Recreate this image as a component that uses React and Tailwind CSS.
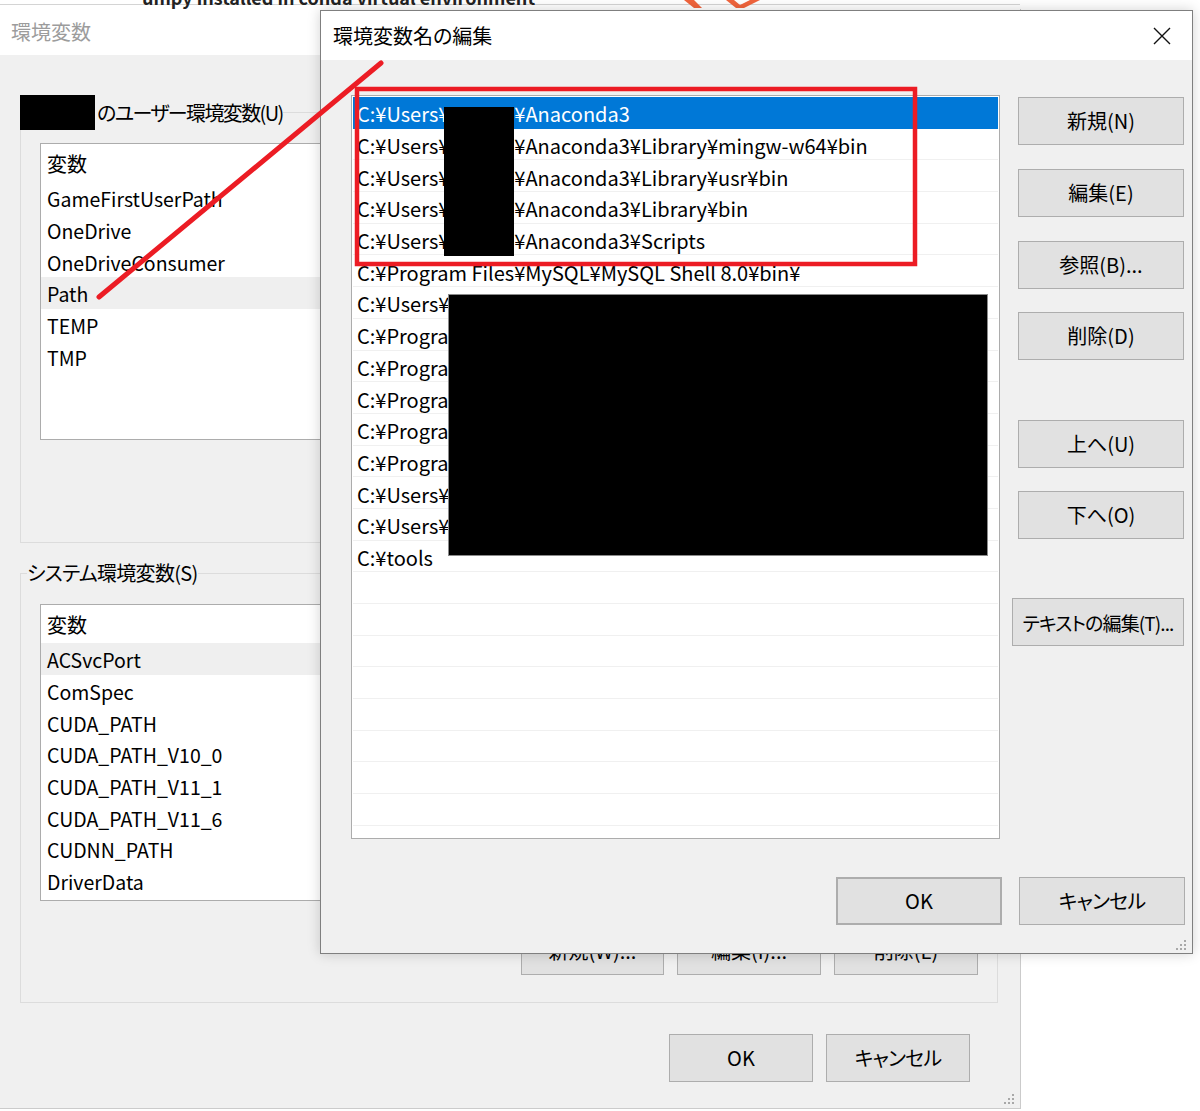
import React from "react";

const FONT = "font-['Noto_Sans_CJK_JP','Noto_Sans',sans-serif] [font-feature-settings:'palt']";

function Btn({ children, className = "" }) {
  return (
    <div
      className={
        "flex items-center justify-center h-[48px] shrink-0 bg-[#e1e1e1] border border-[#adadad] text-black leading-none whitespace-nowrap " +
        className
      }
    >
      {children}
    </div>
  );
}

function Grip() {
  return (
    <svg width="12" height="12" viewBox="0 0 12 12">
      <rect x="9" y="1" width="2" height="2" fill="#a8a8a8" />
      <rect x="5" y="5" width="2" height="2" fill="#a8a8a8" />
      <rect x="9" y="5" width="2" height="2" fill="#a8a8a8" />
      <rect x="1" y="9" width="2" height="2" fill="#a8a8a8" />
      <rect x="5" y="9" width="2" height="2" fill="#a8a8a8" />
      <rect x="9" y="9" width="2" height="2" fill="#a8a8a8" />
    </svg>
  );
}

function VarList({ rows, hi }) {
  return (
    <div className="h-[297px] bg-white border border-[#acacac] overflow-hidden text-[19.5px] text-black">
      <div className="h-[38px] flex items-center pl-[6px] pt-[2px] text-[20px]">変数</div>
      {rows.map((r, i) => (
        <div
          key={r}
          className={
            "h-[31.7px] flex items-center pl-[6px] pt-[2px] whitespace-nowrap " +
            (i === hi ? "bg-[#efefef]" : "")
          }
        >
          {r}
        </div>
      ))}
    </div>
  );
}

const userVars = [
  "GameFirstUserPath",
  "OneDrive",
  "OneDriveConsumer",
  "Path",
  "TEMP",
  "TMP",
];

const sysVars = [
  "ACSvcPort",
  "ComSpec",
  "CUDA_PATH",
  "CUDA_PATH_V10_0",
  "CUDA_PATH_V11_1",
  "CUDA_PATH_V11_6",
  "CUDNN_PATH",
  "DriverData",
];

const pathRows = [
  { pre: "C:¥Users¥", post: "¥Anaconda3" },
  { pre: "C:¥Users¥", post: "¥Anaconda3¥Library¥mingw-w64¥bin" },
  { pre: "C:¥Users¥", post: "¥Anaconda3¥Library¥usr¥bin" },
  { pre: "C:¥Users¥", post: "¥Anaconda3¥Library¥bin" },
  { pre: "C:¥Users¥", post: "¥Anaconda3¥Scripts" },
  { text: "C:¥Program Files¥MySQL¥MySQL Shell 8.0¥bin¥" },
  { text: "C:¥Users¥" },
  { text: "C:¥Program Files" },
  { text: "C:¥Program Files" },
  { text: "C:¥Program Files" },
  { text: "C:¥Program Files" },
  { text: "C:¥Program Files" },
  { text: "C:¥Users¥" },
  { text: "C:¥Users¥" },
  { text: "C:¥tools" },
];

export default function App() {
  const emptyRows = Array.from({ length: 9 });
  return (
    <div className={"relative w-[1200px] h-[1111px] overflow-hidden bg-white " + FONT}>
      {/* background web page strip */}
      <div className="absolute left-0 top-0 w-[1200px] h-[9px] overflow-hidden">
        <div className="w-[1020px] h-[5px] border-b border-[#d4d4d4]"></div>
        <div className="absolute left-[142px] top-[-13px] text-[18px] font-bold leading-[20px] text-[#222] whitespace-nowrap">
          umpy installed in conda virtual environment
        </div>
        <svg className="absolute left-[680px] top-0" width="90" height="9" viewBox="0 0 90 9">
          <path d="M4 0 L14 8 L22 8 L14 0 Z" fill="#f0643c" />
          <path d="M46 0 L56 8 L64 8 L80 0 L70 0 L60 5 L54 0 Z" fill="#f0643c" />
        </svg>
      </div>

      {/* Back window: 環境変数 */}
      <div className="absolute left-0 top-[9px] w-[1021px] h-[1100px] flex flex-col bg-[#f0f0f0] border-r border-b border-[#cbcbcb]">
        <div className="h-[46px] shrink-0 bg-white flex items-center pl-[11px] text-[20px] text-[#9c9c9c]">
          環境変数
        </div>
        <div className="flex-1 flex flex-col pl-[20px] pt-[40px]">
          <fieldset className="w-[978px] border border-[#dcdcdc] p-0 m-0">
            <legend className="flex items-center h-[35px] -ml-[1px] p-0">
              <div className="w-[75px] h-[35px] bg-black"></div>
              <span className="ml-[2px] text-[20px] tracking-[-1.6px] text-black">のユーザー環境変数(U)</span>
            </legend>
            <div className="px-[19px]">
              <div className="mt-[13px]">
                <VarList rows={userVars} hi={3} />
              </div>
              <div className="h-[102px]"></div>
            </div>
          </fieldset>

          <fieldset className="mt-[17px] w-[978px] border border-[#dcdcdc] p-0 m-0">
            <legend className="ml-[6px] h-[26px] leading-[26px] text-[20px] tracking-[-0.7px] text-black p-0">
              システム環境変数(S)
            </legend>
            <div className="px-[19px]">
              <div className="mt-[18px]">
                <VarList rows={sysVars} hi={0} />
              </div>
              <div className="mt-[26px] flex justify-end gap-[13px] pb-[27px]">
                <Btn className="w-[143px] text-[20px]">新規(W)...</Btn>
                <Btn className="w-[144px] text-[20px]">編集(I)...</Btn>
                <Btn className="w-[144px] text-[20px]">削除(L)</Btn>
              </div>
            </div>
          </fieldset>

          <div className="mt-[31px] flex justify-end gap-[13px] pr-[50px]">
            <Btn className="w-[144px] text-[20px]">OK</Btn>
            <Btn className="w-[144px] text-[20px] tracking-[-0.8px]">キャンセル</Btn>
          </div>
        </div>
        <div className="absolute right-[5px] bottom-[3px]">
          <Grip />
        </div>
      </div>

      {/* Front dialog: 環境変数名の編集 */}
      <div className="absolute left-[320px] top-[10px] w-[873px] h-[944px] flex flex-col bg-[#f0f0f0] border border-[#7f7f7f] shadow-[0_0_12px_rgba(0,0,0,0.18)]">
        <div className="h-[49px] shrink-0 bg-white flex items-center justify-between pl-[12px] pr-[20px]">
          <span className="text-[20px] text-black">環境変数名の編集</span>
          <svg width="20" height="20" viewBox="0 0 20 20">
            <path d="M2 2 L18 18 M18 2 L2 18" stroke="#111" strokeWidth="1.4" fill="none" />
          </svg>
        </div>
        <div className="flex-1 flex flex-col relative">
          <div className="flex pt-[35px] pl-[30px]">
            <div className="relative w-[649px] h-[744px] shrink-0 bg-white border border-[#acacac] overflow-hidden pt-[1px] px-[1px] text-[20px] text-black">
              {pathRows.map((r, i) => (
                <div
                  key={i}
                  className={
                    "h-[31.7px] flex items-center pl-[4px] pt-[4px] whitespace-nowrap border-b " +
                    (i === 0
                      ? "bg-[#0078d7] text-white border-[#0078d7]"
                      : "border-[#f0f0f0]")
                  }
                >
                  {r.text ? (
                    r.text
                  ) : (
                    <>
                      <span>{r.pre}</span>
                      <span className="inline-block w-[65px]"></span>
                      <span>{r.post}</span>
                    </>
                  )}
                </div>
              ))}
              {emptyRows.map((_, i) => (
                <div key={"e" + i} className="h-[31.7px] border-b border-[#f0f0f0]"></div>
              ))}
              <div className="absolute left-[92px] top-[11px] w-[70px] h-[149px] bg-black"></div>
              <div className="absolute left-[96px] top-[198px] w-[540px] h-[262px] bg-black border border-[#8a8a8a]"></div>
            </div>
            <div className="ml-[12px] w-[172px] flex flex-col items-end pt-[2px]">
              <Btn className="w-[166px] text-[20px]">新規(N)</Btn>
              <Btn className="w-[166px] mt-[24px] text-[20px]">編集(E)</Btn>
              <Btn className="w-[166px] mt-[24px] text-[20px]">参照(B)...</Btn>
              <Btn className="w-[166px] mt-[23px] text-[20px]">削除(D)</Btn>
              <Btn className="w-[166px] mt-[60px] text-[20px]">上へ(U)</Btn>
              <Btn className="w-[166px] mt-[23px] text-[20px]">下へ(O)</Btn>
              <Btn className="w-[172px] mt-[59px] text-[19px] tracking-[-0.9px]">テキストの編集(T)...</Btn>
            </div>
          </div>
          <div className="mt-[38px] flex justify-end gap-[17px] pr-[7px]">
            <Btn className="w-[166px] text-[20px] border-2 border-[#0078d7]">OK</Btn>
            <Btn className="w-[166px] text-[20px] tracking-[-0.8px]">キャンセル</Btn>
          </div>
          <div className="absolute right-[5px] bottom-[2px]">
            <Grip />
          </div>
        </div>
      </div>

      {/* Red annotations */}
      <svg
        className="absolute left-0 top-0 pointer-events-none"
        width="1200"
        height="1111"
        viewBox="0 0 1200 1111"
      >
        <rect x="357" y="89" width="558" height="175" fill="none" stroke="#ec1c24" strokeWidth="4.5" />
        <line x1="381" y1="63" x2="99" y2="297" stroke="#ec1c24" strokeWidth="5" strokeLinecap="round" />
      </svg>
    </div>
  );
}
